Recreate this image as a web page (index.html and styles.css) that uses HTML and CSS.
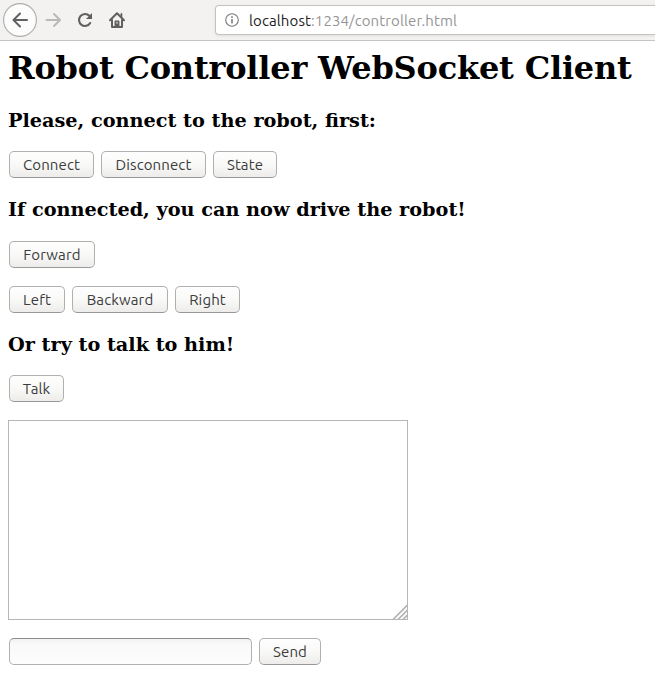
FILE: index.html
```html
<!DOCTYPE html>
<html lang="en">
<head>
<meta charset="utf-8">
<title>Robot Controller</title>
<link rel="stylesheet" href="styles.css">
</head>
<body>
<header class="toolbar">
  <span class="back"><svg width="34" height="34" viewBox="0 0 34 34" fill="none"><circle cx="17" cy="17" r="16.4" fill="#fcfcfc" stroke="#adadab" stroke-width="1.1"/><path d="M24 17H10.5M17 10.5L10.5 17L17 23.5" stroke="#60605f" stroke-width="2" stroke-linecap="round" stroke-linejoin="round"/></svg></span>
  <svg class="forward" width="18" height="18" viewBox="0 0 18 18" fill="none" stroke="#b9b9b7" stroke-width="2" stroke-linecap="round" stroke-linejoin="round"><path d="M1.5 9H15M9 3L15 9L9 15"/></svg>
  <svg class="reload" width="18" height="18" viewBox="0 0 18 18" fill="none"><path d="M14.2 12A6 6 0 1 1 13.4 4.8" stroke="#60605f" stroke-width="2.1" stroke-linecap="round"/><path d="M16 2V8H10Z" fill="#60605f"/></svg>
  <svg class="home" width="18" height="18" viewBox="0 0 18 18" fill="none" stroke="#60605f" stroke-width="2" stroke-linecap="round" stroke-linejoin="round"><path d="M2 9.3L9 2.3L16 9.3M4 9V16H14V9"/><path d="M13.4 3V5.5" stroke-width="1.8"/><path d="M7.4 15.5V10.3H10.6V15.5" stroke-width="1.7"/><path d="M9 13.2V15"/></svg>
  <div class="address">
    <svg width="14" height="14" viewBox="0 0 14 14" fill="none" stroke="#777" stroke-width="1.1"><circle cx="7" cy="7" r="6.3"/><path d="M7 6V10.5M7 3.3V4.9" stroke-width="1.5"/></svg>
    <span class="url"><span class="host">localhost</span><span class="path">:1234/controller.html</span></span>
  </div>
</header>
<main>
  <h1>Robot Controller WebSocket Client</h1>
  <h3 class="first">Please, connect to the robot, first:</h3>
  <div class="row"><button class="connect">Connect</button><button class="disconnect">Disconnect</button><button class="state">State</button></div>
  <h3 class="drive">If connected, you can now drive the robot!</h3>
  <div class="row"><button class="ahead">Forward</button></div>
  <div class="row second"><button class="left">Left</button><button class="backward">Backward</button><button class="right">Right</button></div>
  <h3>Or try to talk to him!</h3>
  <div class="row"><button class="talk">Talk</button></div>
  <div class="log"><textarea aria-label="Messages"></textarea><svg class="grip" width="16" height="16" viewBox="0 0 16 16" stroke="#b3b3b3" stroke-width="1.7"><path d="M1 15.5L15.5 1M6 15.5L15.5 6M11 15.5L15.5 11"/></svg></div>
  <div class="row"><input type="text" aria-label="Message"><button class="send">Send</button></div>
</main>
</body>
</html>
```
FILE: styles.css
```css
* { box-sizing: border-box; }
html, body { margin: 0; background: #fff; overflow: hidden; }
.toolbar {
  display: flex;
  align-items: center;
  height: 41px;
  padding-left: 3px;
  background: #f3f2f0;
  border-bottom: 1px solid #c5c4c2;
}
.toolbar svg { display: block; flex: none; }
.forward { margin-left: 8px; }
.reload { margin-left: 13px; }
.home { margin-left: 14px; }
.address {
  flex: 1;
  display: flex;
  align-items: center;
  gap: 10px;
  height: 30px;
  margin-left: 89px;
  padding-left: 9px;
  background: #fff;
  border: 1px solid #c4c3c1;
  border-right: 0;
  border-radius: 4px 0 0 4px;
  box-shadow: 0 1px 3px rgba(0, 0, 0, .08);
}
.url { padding-top: 1px; font: 15px/20px "Ubuntu", "Noto Sans", sans-serif; letter-spacing: .11px; white-space: nowrap; }
.host { color: #222; }
.path { color: #959595; }
main { padding: 8px 8px 0; }
h1, h3 { margin: 0; font-family: "DejaVu Serif", serif; font-weight: bold; color: #000; white-space: nowrap; }
h1 { font-size: 32px; line-height: 38px; letter-spacing: -.19px; }
h3 { margin: 21px 0 19px; font-size: 19.26px; line-height: 22px; }
h3.first { margin-top: 23px; }
h3.drive { margin-bottom: 20px; }
.row { display: flex; gap: 7px; padding-left: 1px; height: 27px; }
.second { margin-top: 18px; }
button {
  height: 27px;
  padding: 0;
  border: 1px solid #b0b0ae;
  border-bottom-color: #989896;
  border-radius: 5px;
  background: linear-gradient(#fefefe, #f9f9f8 50%, #edecea);
  color: #3c3c3c;
  font: 15px/20px "Ubuntu", "Noto Sans", sans-serif;
  letter-spacing: .12px;
  white-space: nowrap;
}
.connect { width: 85px; }
.disconnect { width: 105px; }
.state { width: 64px; }
.ahead { width: 86px; }
.left { width: 56px; }
.backward { width: 96px; }
.right { width: 65px; }
.talk { width: 55px; }
.send { width: 62px; }
.log { position: relative; width: 400px; height: 200px; margin: 18px 0; }
textarea {
  display: block;
  width: 100%;
  height: 100%;
  border: 1px solid #b6b6b4;
  background: #fff;
  resize: none;
}
.grip { position: absolute; right: 0; bottom: 0; }
input {
  width: 243px;
  height: 27px;
  border: 1px solid #b0b0ae;
  border-top-color: #8e8e8c;
  border-radius: 5px;
  background: linear-gradient(#f1f1f0, #f9f9f9 5px, #fdfdfd);
}
```
